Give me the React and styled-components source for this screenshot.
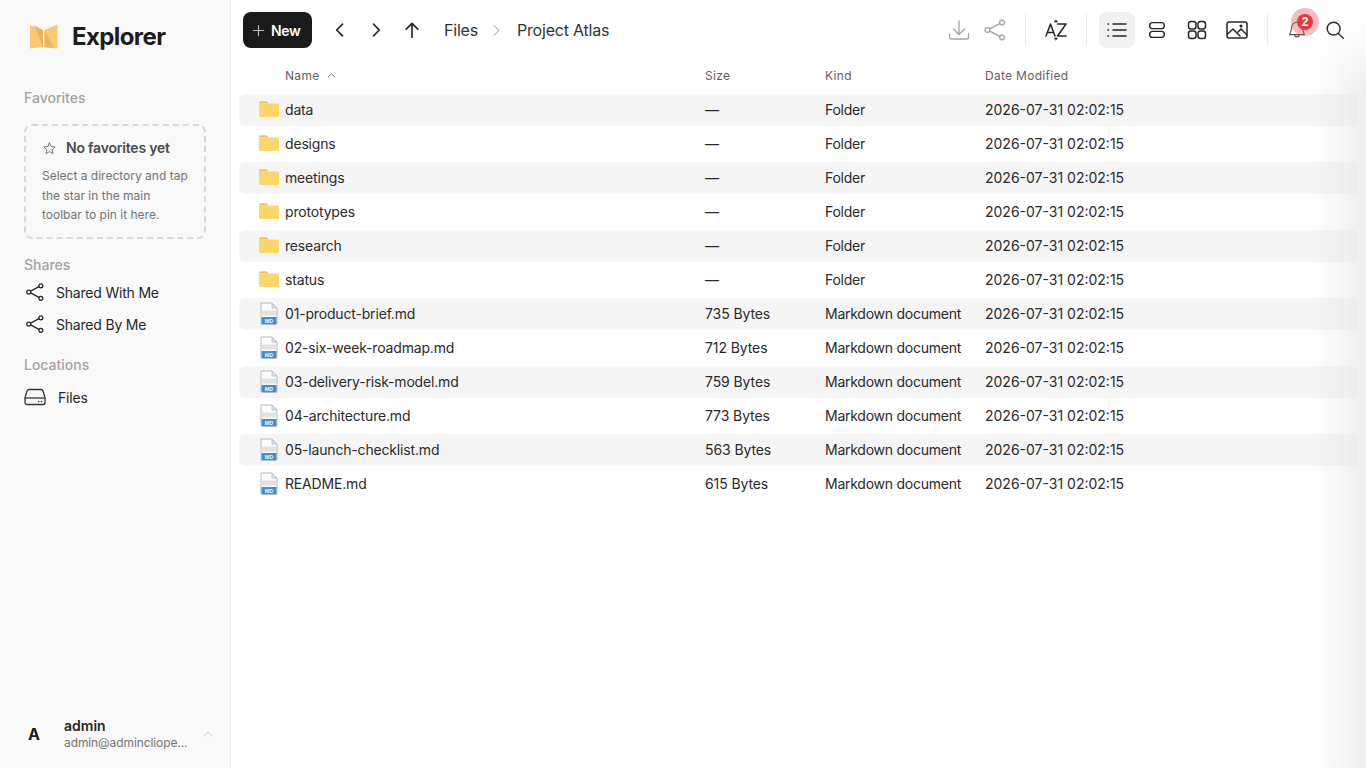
import React from "react";
import styled, { createGlobalStyle } from "styled-components";

const Global = createGlobalStyle`
  html, body { margin: 0; padding: 0; height: 100%; background: #fff; overflow: hidden; }
  body { font-family: Inter, "Liberation Sans", sans-serif; color: #1f1f1f; }
  #root { height: 100%; }
`;

const Shell = styled.div`
  display: flex;
  height: 768px;
  width: 1366px;
  position: relative;
  overflow: hidden;
`;
const Sidebar = styled.aside`
  width: 231px;
  box-sizing: border-box;
  flex: none;
  background: #f9f9f9;
  border-right: 1px solid #ececec;
  display: flex;
  flex-direction: column;
  padding: 0 8px 0 24px;
`;
const Brand = styled.div`
  display: flex;
  align-items: center;
  gap: 14px;
  height: 72px;
  padding-left: 6px;
  margin-bottom: 16px;
`;
const BrandName = styled.div`
  font-size: 24px;
  font-weight: 700;
  color: #1c1c1c;
  letter-spacing: -0.6px;
`;
const SectionLabel = styled.div`
  font-size: 14px;
  font-weight: 500;
  line-height: 20px;
  color: #a3a3a3;
  margin: ${(p) => p.$m || "0"};
`;
const EmptyCard = styled.div`
  margin-top: 16px;
  width: 182px;
  height: 115px;
  box-sizing: border-box;
  border: 2px dashed #d8d8d8;
  border-radius: 8px;
  padding: 12px 16px;
  margin-bottom: 16px;
`;
const EmptyTitle = styled.div`
  display: flex;
  align-items: center;
  gap: 9px;
  font-size: 14px;
  font-weight: 600;
  letter-spacing: -0.2px;
  color: #4a4a4a;
  line-height: 20px;
  margin-bottom: 8px;
`;
const StarWrap = styled.span`
  display: flex;
  color: #666;
`;
const EmptyText = styled.div`
  font-size: 12px;
  line-height: 19.5px;
  color: #737373;
  white-space: nowrap;
`;
const NavList = styled.div`
  display: flex;
  flex-direction: column;
  margin-top: 1px;
`;
const NavItem = styled.div`
  display: flex;
  align-items: center;
  height: 32px;
  gap: ${(p) => p.$gap || 12}px;
  font-size: 14px;
  letter-spacing: -0.2px;
  color: #262626;
  padding-left: ${(p) => p.$pad ?? 0}px;
`;
const SideSpacer = styled.div`
  flex: 1;
`;
const UserRow = styled.div`
  display: flex;
  align-items: center;
  height: 36px;
  margin-bottom: 16px;
`;
const Avatar = styled.div`
  width: 40px;
  font-size: 16px;
  font-weight: 700;
  color: #1c1c1c;
  flex: none;
  padding-left: 4px;
  box-sizing: border-box;
`;
const UserText = styled.div`
  display: flex;
  flex-direction: column;
  width: 137px;
  flex: none;
`;
const UserName = styled.div`
  font-size: 14px;
  font-weight: 600;
  line-height: 18px;
  color: #262626;
`;
const UserMail = styled.div`
  font-size: 12px;
  line-height: 16px;
  letter-spacing: -0.1px;
  color: #737373;
  white-space: nowrap;
`;
const ChevronWrap = styled.span`
  display: flex;
  color: #bdbdbd;
`;
const Main = styled.main`
  flex: 1;
  min-width: 0;
  display: flex;
  flex-direction: column;
`;
const Toolbar = styled.header`
  display: flex;
  align-items: center;
  height: 60px;
  padding: 0 13px 0 12px;
  flex: none;
`;
const NewButton = styled.button`
  display: flex;
  align-items: center;
  gap: 5px;
  width: 69px;
  height: 36px;
  border: 0;
  border-radius: 8px;
  background: #1a1a1a;
  color: #fff;
  font: 600 14px Inter, sans-serif;
  letter-spacing: -0.35px;
  padding: 0 0 0 8px;
  margin-right: 10px;
`;
const PlusWrap = styled.span`
  display: flex;
  color: #bbb;
`;
const IconBtn = styled.button`
  width: 36px;
  height: 36px;
  flex: none;
  display: flex;
  align-items: center;
  justify-content: center;
  border: 0;
  padding: 0;
  border-radius: 8px;
  color: ${(p) => (p.$muted ? "#a3a3a3" : "#262626")};
  background: ${(p) => (p.$active ? "#f1f1f1" : "transparent")};
  margin-left: ${(p) => p.$ml || 0}px;
  position: relative;
`;
const Crumbs = styled.nav`
  display: flex;
  align-items: center;
  font-size: 16px;
  letter-spacing: -0.2px;
  color: #333;
  margin-left: 14px;
`;
const CrumbSep = styled.span`
  display: flex;
  width: 18px;
  margin: 0 11px 0 10px;
  justify-content: center;
  color: #8a8a8a;
`;
const Grow = styled.div`
  flex: 1;
`;
const Divider = styled.div`
  width: 1px;
  height: 32px;
  background: #ececec;
  flex: none;
  margin: ${(p) => p.$m || "0 12px"};
`;
const BellWrap = styled.span`
  display: flex;
  color: #555;
`;
const Badge = styled.span`
  position: absolute;
  top: 2px;
  left: 18px;
  width: 16px;
  height: 16px;
  border-radius: 50%;
  background: #e5383f;
  box-shadow: 0 0 0 6px rgba(229, 56, 63, 0.33);
  color: #fff;
  font-size: 12px;
  font-weight: 700;
  line-height: 16px;
  text-align: center;
`;
const TableHead = styled.div`
  display: grid;
  grid-template-columns: 420px 120px 160px 1fr;
  align-items: center;
  height: 34px;
  box-sizing: border-box;
  padding: 0 0 4px 46px;
  margin: 0 8px 0 8px;
  font-size: 12px;
  letter-spacing: 0.3px;
  color: #5f5f5f;
  flex: none;
`;
const HeadName = styled.span`
  display: flex;
  align-items: center;
  gap: 6px;
`;
const Rows = styled.div`
  display: flex;
  flex-direction: column;
  gap: 2px;
  margin: 0 8px 0 8px;
`;
const Row = styled.div`
  display: grid;
  grid-template-columns: 420px 120px 160px 1fr;
  align-items: center;
  height: 32px;
  box-sizing: border-box;
  padding: 0 0 2px 46px;
  position: relative;
  border-radius: 6px;
  font-size: 14px;
  color: #2a2a2a;
  background: ${(p) => (p.$alt ? "#f5f5f5" : "transparent")};
`;
const NameCell = styled.span`
  letter-spacing: -0.17px;
`;
const SizeCell = styled.span`
  letter-spacing: -0.1px;
`;
const KindCell = styled.span`
  letter-spacing: -0.25px;
`;
const RowIcon = styled.span`
  position: absolute;
  left: ${(p) => p.$left}px;
  top: ${(p) => p.$top}px;
  display: flex;
`;
const EdgeShade = styled.div`
  position: absolute;
  top: 0;
  right: 0;
  bottom: 0;
  width: 56px;
  pointer-events: none;
  background: linear-gradient(to right, rgba(228, 228, 228, 0), rgba(228, 228, 228, 0.6));
  mask-image: linear-gradient(to bottom, transparent 16px, #000 90px);
`;

const Logo = () => (
  <svg width="28" height="25" viewBox="0 0 28 25">
    <path d="M0 1l13 5v17L0 24.500z" fill="#f7c970" />
    <path d="M27.500 0.500l-13 5.500v17l13 1.500z" fill="#f7c970" />
    <path d="M4 1l9 5v17z" fill="#e8a94e" opacity=".7" />
    <path d="M14.500 6l9.500 18.500-9.500-1.500z" fill="#e8a94e" opacity=".7" />
  </svg>
);
const Stroke = ({ size = 20, w = 1.6, children }) => (
  <svg width={size} height={size} viewBox="0 0 24 24" fill="none" stroke="currentColor" strokeWidth={w} strokeLinecap="round" strokeLinejoin="round">
    {children}
  </svg>
);
const ShareIcon = ({ size = 22, w = 1.5 }) => (
  <Stroke size={size} w={w}>
    <circle cx="19" cy="4.500" r="2.400" />
    <circle cx="4.500" cy="12" r="2.400" />
    <circle cx="19" cy="19.500" r="2.400" />
    <path d="M6.700 10.900l10.100-5.300M6.700 13.100l10.100 5.300" />
  </Stroke>
);
const DriveIcon = () => (
  <svg width="22" height="20" viewBox="0 0 22 20" fill="none" stroke="#333" strokeWidth="1.300">
    <path d="M5 2.500h12c1 0 1.500.500 2 1.500l2 6.500v5c0 1.200-.8 2-2 2H3c-1.200 0-2-.8-2-2v-5L3 4c.5-1 1-1.500 2-1.500z" />
    <path d="M1 11h20" />
    <path d="M14.500 14.500h.4M17.300 14.500h.4" strokeLinecap="round" />
  </svg>
);
const Folder = () => (
  <svg width="22" height="20" viewBox="0 0 22 20">
    <path d="M1 5.500V4c0-1 .7-1.700 1.700-1.700h5c.8 0 1.200.3 1.700.8l1.300 1.400H1z" fill="#f2c04d" />
    <path d="M2.500 4.500h17c1 0 1.500.600 1.500 1.500v10.500c0 1-.6 1.500-1.500 1.500h-17C1.500 18 1 17.400 1 16.500V6c0-1 .5-1.500 1.500-1.500z" fill="#fbd76b" />
  </svg>
);
const MdFile = () => (
  <svg width="18" height="23" viewBox="0 0 18 23">
    <path d="M1 1h11l5 5v15.500c0 .5-.4 1-1 1H2c-.6 0-1-.5-1-1z" fill="#fcfcfc" stroke="#b4bac1" strokeWidth="1" />
    <path d="M12 1v5h5z" fill="#e3e6ea" stroke="#b4bac1" strokeWidth=".8" />
    <rect x="1.500" y="8.500" width="15" height="5" fill="#dfe2e6" />
    <rect x="1.500" y="15" width="15" height="7" fill="#3e8fd8" />
    <text x="9" y="20.500" textAnchor="middle" fontSize="5" fontWeight="700" fontFamily="Inter, sans-serif" fill="#eaf4fd">MD</text>
  </svg>
);

const folders = ["data", "designs", "meetings", "prototypes", "research", "status"];
const files = [
  ["01-product-brief.md", "735 Bytes"],
  ["02-six-week-roadmap.md", "712 Bytes"],
  ["03-delivery-risk-model.md", "759 Bytes"],
  ["04-architecture.md", "773 Bytes"],
  ["05-launch-checklist.md", "563 Bytes"],
  ["README.md", "615 Bytes"],
];
const items = [
  ...folders.map((n) => ({ name: n, size: "—", kind: "Folder", folder: true })),
  ...files.map(([n, s]) => ({ name: n, size: s, kind: "Markdown document" })),
];
const DATE = "2026-07-31 02:02:15";

export default function App() {
  return (
    <>
      <Global />
      <Shell>
        <Sidebar>
          <Brand>
            <Logo />
            <BrandName>Explorer</BrandName>
          </Brand>
          <SectionLabel>Favorites</SectionLabel>
          <EmptyCard>
            <EmptyTitle>
              <StarWrap>
                <Stroke size={15} w={1.400}>
                  <path d="M12 3l2.700 5.800 6.300.8-4.600 4.300 1.200 6.200L12 17l-5.600 3.100 1.200-6.200L3 9.600l6.300-.8z" />
                </Stroke>
              </StarWrap>
              No favorites yet
            </EmptyTitle>
            <EmptyText>
              Select a directory and tap
              <br />
              the star in the main
              <br />
              toolbar to pin it here.
            </EmptyText>
          </EmptyCard>
          <SectionLabel>Shares</SectionLabel>
          <NavList>
            <NavItem $gap={11} $pad={1}>
              <ShareIcon size={20} w={1.500} />
              Shared With Me
            </NavItem>
            <NavItem $gap={11} $pad={1}>
              <ShareIcon size={20} w={1.500} />
              Shared By Me
            </NavItem>
          </NavList>
          <SectionLabel $m="15px 0 6px">Locations</SectionLabel>
          <NavItem $gap={12}>
            <DriveIcon />
            Files
          </NavItem>
          <SideSpacer />
          <UserRow>
            <Avatar>A</Avatar>
            <UserText>
              <UserName>admin</UserName>
              <UserMail>admin@admincliope...</UserMail>
            </UserText>
            <ChevronWrap>
              <Stroke size={14} w={1.400}>
                <path d="M5 15l7-6 7 6" />
              </Stroke>
            </ChevronWrap>
          </UserRow>
        </Sidebar>
        <Main>
          <Toolbar>
            <NewButton>
              <PlusWrap>
                <Stroke size={15} w={1.800}>
                  <path d="M12 4v16M4 12h16" />
                </Stroke>
              </PlusWrap>
              New
            </NewButton>
            <IconBtn>
              <Stroke size={20} w={2}>
                <path d="M15 5l-7 7 7 7" />
              </Stroke>
            </IconBtn>
            <IconBtn>
              <Stroke size={20} w={2}>
                <path d="M9 5l7 7-7 7" />
              </Stroke>
            </IconBtn>
            <IconBtn>
              <Stroke size={20} w={2}>
                <path d="M12 21V4M5 11l7-7 7 7" />
              </Stroke>
            </IconBtn>
            <Crumbs>
              Files
              <CrumbSep>
                <Stroke size={15} w={1.500}>
                  <path d="M8 4l8 8-8 8" />
                </Stroke>
              </CrumbSep>
              Project Atlas
            </Crumbs>
            <Grow />
            <IconBtn $muted>
              <Stroke size={24} w={1.300}>
                <path d="M12 3v13M6.500 11l5.500 5.500 5.500-5.500" />
                <path d="M2.500 16v3c0 1.200.8 2 2 2h15c1.200 0 2-.8 2-2v-3" />
              </Stroke>
            </IconBtn>
            <IconBtn $muted>
              <ShareIcon size={24} w={1.300} />
            </IconBtn>
            <Divider />
            <IconBtn>
              <svg width="24" height="24" viewBox="0 0 24 24" fill="none" stroke="#262626" strokeWidth="1.500" strokeLinecap="round" strokeLinejoin="round">
                <path d="M2 18l4.500-12L11 18M3.600 14.500h5.800" />
                <path d="M13.500 6H22l-8.500 12H22" />
                <path d="M12 2l1.500 2h-3z" fill="#262626" strokeWidth=".6" />
                <path d="M12 22l1.500-2h-3z" fill="#262626" strokeWidth=".6" />
              </svg>
            </IconBtn>
            <Divider />
            <IconBtn $active>
              <Stroke size={24} w={1.500}>
                <path d="M8 6h13M8 12h13M8 18h13M3 6h.5M3 12h.5M3 18h.5" />
              </Stroke>
            </IconBtn>
            <IconBtn $ml={4}>
              <Stroke size={22} w={1.500}>
                <rect x="4" y="4" width="16" height="6.500" rx="3.200" />
                <rect x="4" y="13.500" width="16" height="6.500" rx="3.200" />
              </Stroke>
            </IconBtn>
            <IconBtn $ml={4}>
              <Stroke size={24} w={1.500}>
                <rect x="3.500" y="3.500" width="7.500" height="7.500" rx="2.500" />
                <rect x="13" y="3.500" width="7.500" height="7.500" rx="2.500" />
                <rect x="3.500" y="13" width="7.500" height="7.500" rx="2.500" />
                <rect x="13" y="13" width="7.500" height="7.500" rx="2.500" />
              </Stroke>
            </IconBtn>
            <IconBtn $ml={4}>
              <Stroke size={24} w={1.500}>
                <rect x="2" y="4" width="20" height="16" rx="2" />
                <path d="M2.500 16l5.500-5 7 7" />
                <path d="M13 14l3-3 5.500 5.500" />
                <circle cx="16" cy="8" r=".8" />
              </Stroke>
            </IconBtn>
            <Divider $m="0 11px 0 12px" />
            <IconBtn>
              <BellWrap>
                <Stroke size={22} w={1.200}>
                  <path d="M6 9.500a6 6 0 0 1 12 0c0 4.500 2 6 2 7.500H4c0-1.500 2-3 2-7.500z" />
                  <path d="M9.500 17a2.500 2.500 0 0 0 5 0" />
                </Stroke>
              </BellWrap>
              <Badge>2</Badge>
            </IconBtn>
            <IconBtn $ml={2}>
              <Stroke size={22} w={1.600}>
                <circle cx="10.500" cy="10.500" r="7" />
                <path d="M16 16l5 5" />
              </Stroke>
            </IconBtn>
          </Toolbar>
          <TableHead>
            <HeadName>
              Name
              <Stroke size={11} w={1.800}>
                <path d="M5 15l7-7 7 7" />
              </Stroke>
            </HeadName>
            <span>Size</span>
            <span>Kind</span>
            <span>Date Modified</span>
          </TableHead>
          <Rows>
            {items.map((it, i) => (
              <Row key={it.name} $alt={i % 2 === 0}>
                <RowIcon $left={it.folder ? 19 : 21} $top={it.folder ? 5 : 4}>
                  {it.folder ? <Folder /> : <MdFile />}
                </RowIcon>
                <NameCell>{it.name}</NameCell>
                <SizeCell>{it.size}</SizeCell>
                <KindCell>{it.kind}</KindCell>
                <span>{DATE}</span>
              </Row>
            ))}
          </Rows>
        </Main>
        <EdgeShade />
      </Shell>
    </>
  );
}
